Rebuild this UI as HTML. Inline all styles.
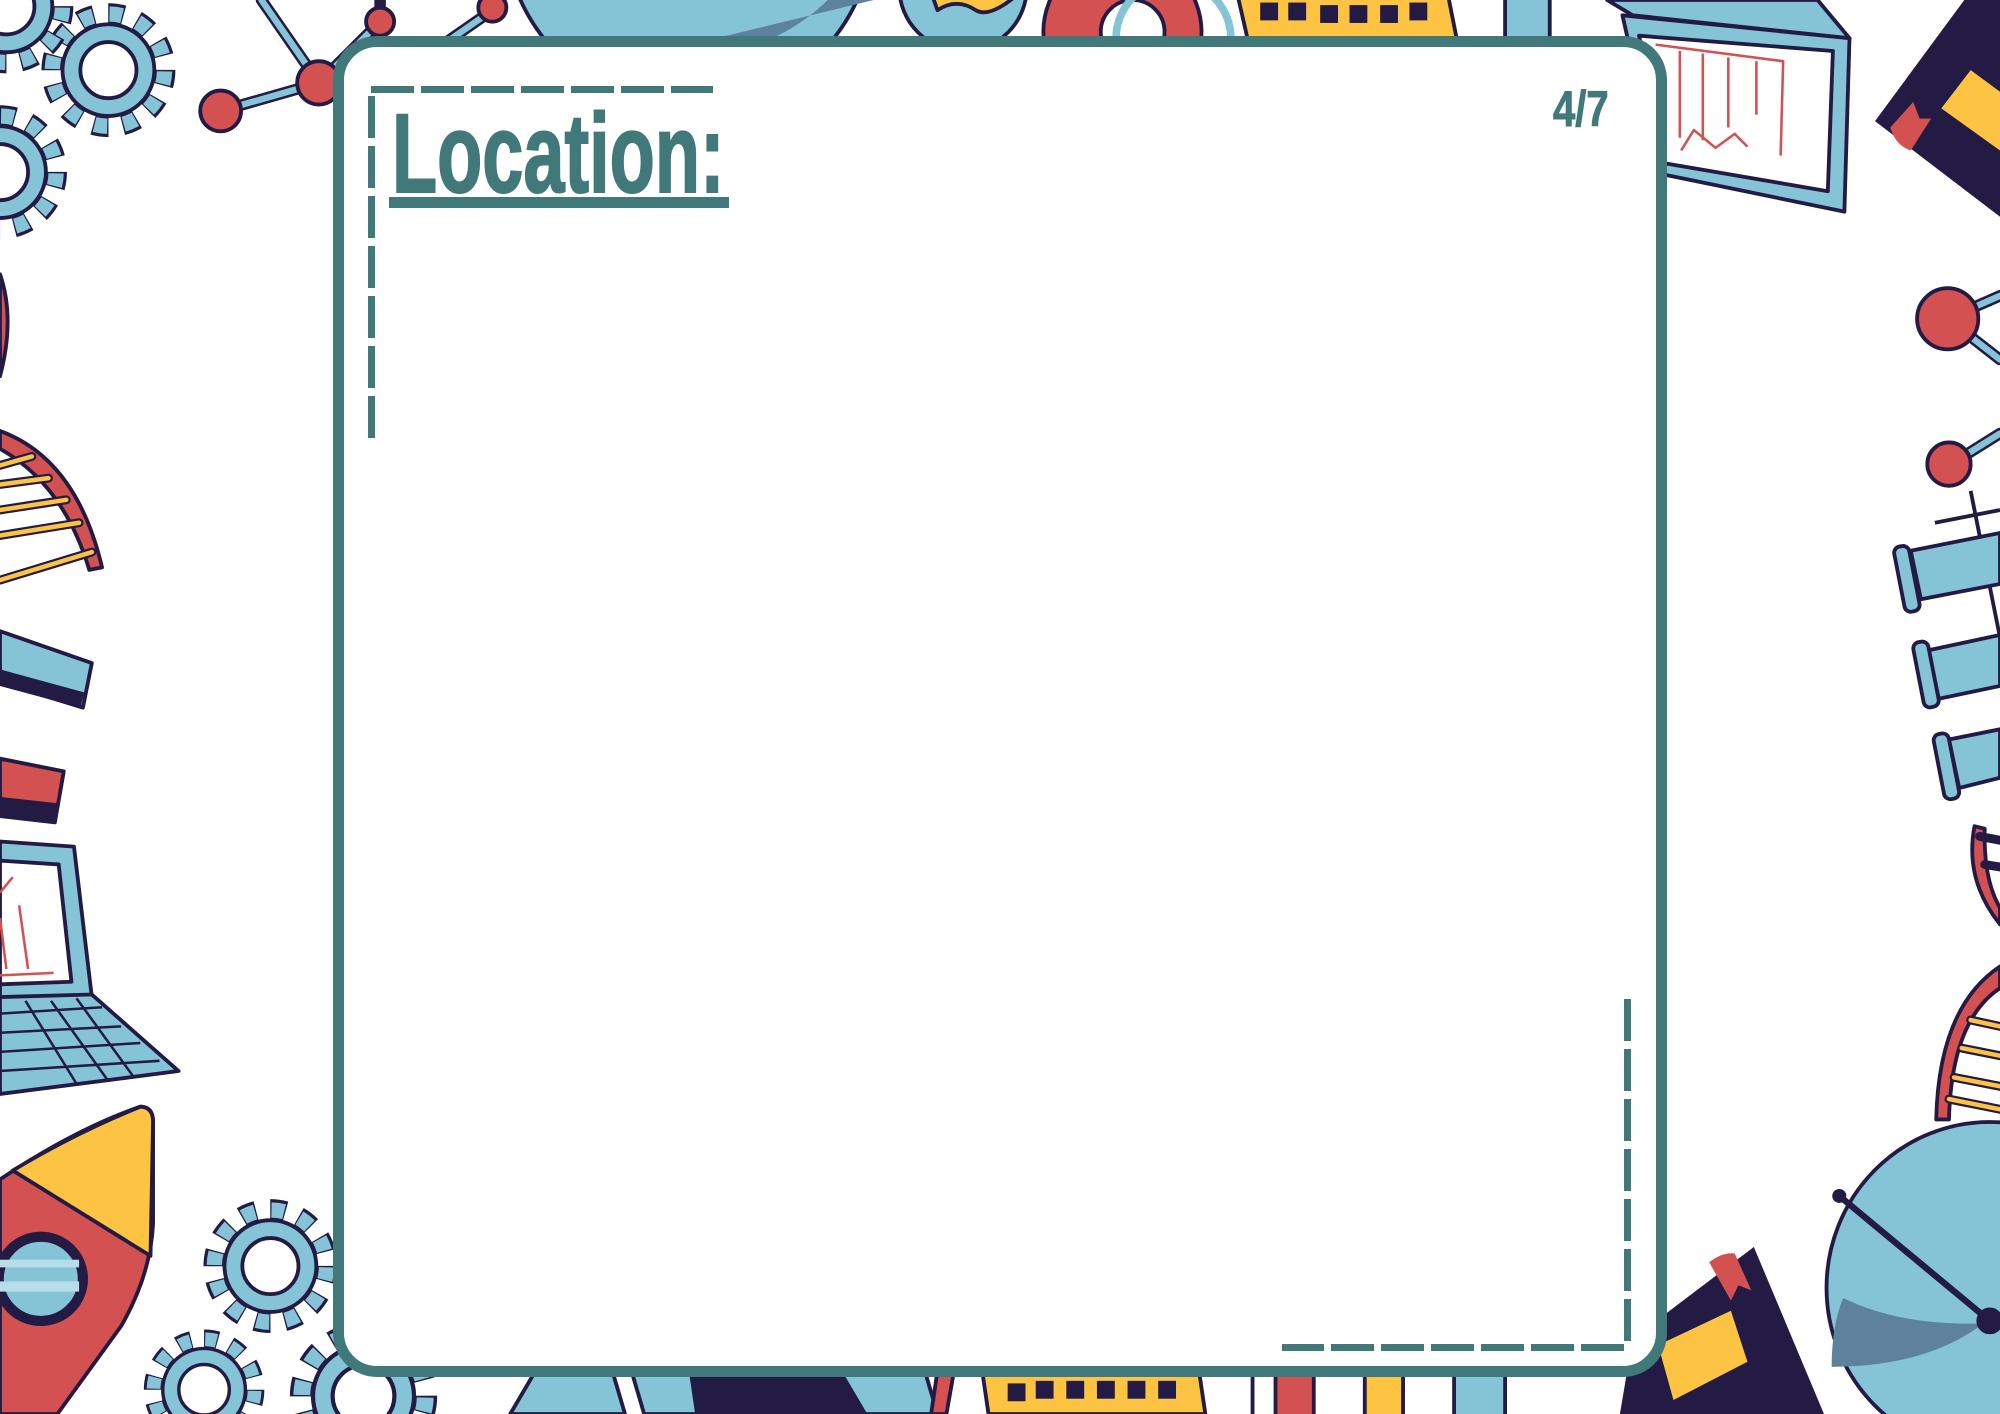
<!DOCTYPE html>
<html><head><meta charset="utf-8"><style>
html,body{margin:0;padding:0;background:#fff;}
body{width:2000px;height:1414px;position:relative;overflow:hidden;font-family:"Liberation Sans",sans-serif;}
svg.bg{position:absolute;left:0;top:0;}
.card{position:absolute;left:333px;top:36px;width:1334px;height:1341px;box-sizing:border-box;border:11px solid #41797B;border-radius:44px;background:#fff;}
.t{position:absolute;color:#41797B;font-family:"Liberation Sans",sans-serif;font-weight:bold;white-space:nowrap;-webkit-text-stroke:2px #41797B;}
.d{position:absolute;background:#41797B;}
</style></head><body>
<svg class="bg" width="2000" height="1414" viewBox="0 0 1568 1109" preserveAspectRatio="none">
<defs>
<g id="gear"><circle r="44" fill="none" stroke="#241B45" stroke-width="17" stroke-dasharray="12 11"/><circle r="44" fill="none" stroke="#85C4D6" stroke-width="12" stroke-dasharray="10 13" stroke-dashoffset="-1"/><circle r="36" fill="#85C4D6" stroke="#241B45" stroke-width="3"/><circle r="22" fill="#fff" stroke="#241B45" stroke-width="3"/></g>
</defs>
<g stroke="#241B45" stroke-width="3" stroke-linejoin="round">
<use href="#gear" x="85" y="55"/>
<use href="#gear" x="0" y="135"/>
<use href="#gear" x="5" y="5"/>
<g stroke-width="9" stroke-linecap="round"><line x1="173" y1="87" x2="250" y2="65"/><line x1="250" y1="65" x2="205" y2="0"/><line x1="250" y1="65" x2="298" y2="17"/><line x1="298" y1="17" x2="298" y2="0"/><line x1="340" y1="40" x2="386" y2="8"/></g>
<g stroke="#85C4D6" stroke-width="5" stroke-linecap="round"><line x1="173" y1="87" x2="250" y2="65"/><line x1="250" y1="65" x2="205" y2="0"/><line x1="250" y1="65" x2="298" y2="17"/><line x1="340" y1="40" x2="386" y2="8"/></g>
<circle cx="173" cy="87" r="16" fill="#D35150"/><circle cx="250" cy="65" r="17" fill="#D35150"/><circle cx="298" cy="17" r="11" fill="#D35150"/><circle cx="386" cy="6" r="11" fill="#D35150"/>
<circle cx="540" cy="-60" r="145" fill="#85C4D6"/>
<path d="M520 40 A145 145 0 0 0 685 -60 L685 0 Z" fill="#5E819E" stroke="none"/>
<circle cx="755" cy="-10" r="50" fill="#85C4D6"/>
<path d="M735 8 q15 -10 30 0 q10 6 30 -10 L800 -20 L725 -20Z" fill="#FDC443"/>
<circle cx="880" cy="25" r="62" fill="#D35150"/><circle cx="888" cy="25" r="25" fill="#fff"/>
<circle cx="920" cy="30" r="45" fill="none" stroke="#85C4D6" stroke-width="6"/>
<path d="M970 -5 L1135 -5 L1142 30 L978 30Z" fill="#FDC443"/>
<g fill="#241B45" stroke="none"><rect x="988" y="2" width="14" height="14"/><rect x="1010" y="2" width="14" height="14"/><rect x="1035" y="4" width="14" height="14"/><rect x="1058" y="4" width="14" height="14"/><rect x="1082" y="4" width="14" height="14"/><rect x="1105" y="2" width="14" height="14"/></g>
<rect x="1180" y="-5" width="35" height="45" fill="#85C4D6"/>
<path d="M1260 0 L1425 0 L1450 30 L1280 12Z" fill="#85C4D6"/>
<path d="M1272 12 L1450 30 L1446 166 L1300 136 Z" fill="#85C4D6"/>
<path d="M1285 28 L1437 40 L1433 150 L1305 128Z" fill="#fff"/>
<g stroke="#D35150" stroke-width="2" fill="none"><path d="M1298 35 L1398 48 L1396 122"/><path d="M1317 40 V108 M1335 42 V110 M1355 45 V100 M1377 48 V90"/><path d="M1318 118 L1328 102 L1345 116 L1360 105 L1370 115"/></g>
<path d="M1470 95 L1540 0 L1568 0 L1568 170 L1500 118Z" fill="#241B45" stroke="none"/>
<path d="M1522 85 L1545 55 L1568 72 L1568 118Z" fill="#FDC443" stroke="none"/>
<path d="M1482 100 L1500 80 L1505 93 L1514 93 L1498 118 Q1486 114 1482 100Z" fill="#D35150" stroke="none"/>
<g stroke-width="9" stroke-linecap="round"><line x1="1527" y1="250" x2="1568" y2="232"/><line x1="1527" y1="250" x2="1568" y2="282"/><line x1="1528" y1="365" x2="1568" y2="340"/></g>
<g stroke="#85C4D6" stroke-width="5" stroke-linecap="round"><line x1="1527" y1="250" x2="1568" y2="232"/><line x1="1527" y1="250" x2="1568" y2="282"/><line x1="1528" y1="365" x2="1568" y2="340"/></g>
<circle cx="1527" cy="250" r="24" fill="#D35150"/><circle cx="1528" cy="364" r="17" fill="#D35150"/>
<line x1="1517" y1="410" x2="1568" y2="400"/><line x1="1545" y1="385" x2="1568" y2="500"/>
<path d="M1498 432 L1568 418 L1568 458 L1506 470Z" fill="#85C4D6"/><rect x="1489" y="428" width="12" height="52" rx="5" fill="#85C4D6" transform="rotate(-11 1495 454)"/>
<path d="M1512 510 L1568 498 L1568 538 L1520 548Z" fill="#85C4D6"/><rect x="1504" y="503" width="12" height="52" rx="5" fill="#85C4D6" transform="rotate(-11 1510 529)"/>
<path d="M1528 580 L1568 572 L1568 610 L1536 618Z" fill="#85C4D6"/><rect x="1520" y="575" width="12" height="52" rx="5" fill="#85C4D6" transform="rotate(-11 1526 601)"/>
<path d="M1548 648 Q1540 690 1568 725 L1568 712 Q1555 690 1556 650Z" fill="#D35150"/>
<path d="M1568 758 Q1520 790 1518 878 L1528 878 Q1530 800 1568 775Z" fill="#D35150"/>
<g stroke-width="7" stroke-linecap="round"><line x1="1545" y1="800" x2="1568" y2="805"/><line x1="1538" y1="822" x2="1568" y2="828"/><line x1="1532" y1="845" x2="1568" y2="852"/><line x1="1528" y1="862" x2="1568" y2="870"/><line x1="1552" y1="656" x2="1568" y2="659"/><line x1="1556" y1="678" x2="1568" y2="680"/></g>
<g stroke="#FDC443" stroke-width="3.5" stroke-linecap="round"><line x1="1545" y1="800" x2="1568" y2="805"/><line x1="1538" y1="822" x2="1568" y2="828"/><line x1="1532" y1="845" x2="1568" y2="852"/><line x1="1528" y1="862" x2="1568" y2="870"/></g>
<ellipse cx="1560" cy="1010" rx="128" ry="130" fill="#85C4D6"/>
<path d="M1445 1018 Q1490 1040 1555 1038 Q1510 1072 1436 1072 Q1436 1040 1445 1018Z" fill="#5E819E" stroke="none"/>
<line x1="1442" y1="938" x2="1560" y2="1036" stroke-width="5"/><circle cx="1442" cy="938" r="4" fill="#241B45"/><circle cx="1560" cy="1036" r="9" fill="#241B45"/>
<path d="M1280 1050 L1375 978 L1430 1109 L1270 1109Z" fill="#241B45" stroke="none"/>
<path d="M1300 1055 L1357 1028 L1370 1068 L1312 1098Z" fill="#FDC443" stroke="none"/>
<path d="M1340 990 Q1350 982 1360 983 L1373 1012 L1363 1008 L1357 1020Z" fill="#D35150" stroke="none"/>
<path d="M400 1109 L420 1075 L480 1075 L490 1109Z" fill="#85C4D6"/>
<path d="M495 1075 L725 1075 L735 1109 L505 1109Z" fill="#85C4D6"/>
<path d="M540 1075 L660 1075 L680 1109 L545 1109Z" fill="#241B45" stroke="none"/>
<path d="M735 1075 L748 1075 L742 1109 L730 1109Z" fill="#D35150"/>
<path d="M770 1075 L940 1075 L945 1109 L775 1109Z" fill="#FDC443"/>
<g fill="#241B45" stroke="none"><rect x="790" y="1085" width="14" height="14"/><rect x="812" y="1083" width="14" height="14"/><rect x="836" y="1083" width="14" height="14"/><rect x="860" y="1083" width="14" height="14"/><rect x="884" y="1083" width="14" height="14"/><rect x="908" y="1083" width="14" height="14"/></g>
<rect x="982" y="1075" width="20" height="40" fill="#fff"/><rect x="1000" y="1075" width="30" height="40" fill="#D35150"/><rect x="1070" y="1075" width="30" height="40" fill="#FDC443"/><rect x="1140" y="1075" width="40" height="40" fill="#85C4D6"/>
<use href="#gear" x="212" y="993"/>
<g transform="translate(160 1090) scale(0.9)"><use href="#gear"/></g>
<g transform="translate(285 1095) scale(1.1)"><use href="#gear"/></g>
<path d="M0 925 Q60 885 110 868 Q120 868 120 880 L120 960 Q118 1000 95 1040 L45 1109 L0 1109Z" fill="#D35150"/>
<path d="M10 918 Q60 888 110 868 Q120 868 120 880 L118 985Z" fill="#FDC443"/>
<circle cx="32" cy="1003" r="33" fill="#85C4D6" stroke-width="8"/>
<rect x="0" y="988" width="62" height="6" fill="#B7DEE8" stroke="none"/><rect x="0" y="1005" width="62" height="8" fill="#B7DEE8" stroke="none"/>
<path d="M0 660 L58 664 L72 782 L0 785Z" fill="#85C4D6"/>
<path d="M0 675 L46 678 L56 770 L0 772Z" fill="#fff"/>
<g stroke="#D35150" stroke-width="2" fill="none"><path d="M0 765 L42 763 M15 710 L22 760 M0 720 L5 760 M0 700 L10 688"/></g>
<path d="M0 782 L72 780 L140 840 L0 858Z" fill="#85C4D6"/>
<g stroke-width="2"><path d="M0 795 L80 790 M0 810 L95 805 M0 825 L110 818 M0 840 L125 832 M20 785 L60 850 M40 785 L85 848 M60 783 L105 845"/></g>
<path d="M0 495 L72 520 L65 555 L0 535Z" fill="#85C4D6"/><path d="M0 525 L66 543 L63 555 L0 538Z" fill="#241B45" stroke="none"/>
<path d="M0 595 L50 605 L43 645 L0 640Z" fill="#D35150"/><path d="M0 625 L45 630 L43 645 L0 640Z" fill="#241B45" stroke="none"/>
<path d="M0 338 Q60 360 80 445 L70 447 Q50 380 0 352Z" fill="#D35150"/>
<g stroke-width="7" stroke-linecap="round"><line x1="0" y1="365" x2="25" y2="358"/><line x1="0" y1="380" x2="38" y2="375"/><line x1="0" y1="400" x2="52" y2="392"/><line x1="0" y1="420" x2="62" y2="410"/><line x1="0" y1="455" x2="72" y2="433"/></g>
<g stroke="#FDC443" stroke-width="3.5" stroke-linecap="round"><line x1="0" y1="365" x2="25" y2="358"/><line x1="0" y1="380" x2="38" y2="375"/><line x1="0" y1="400" x2="52" y2="392"/><line x1="0" y1="420" x2="62" y2="410"/><line x1="0" y1="455" x2="72" y2="433"/></g>
<path d="M0 215 Q12 250 0 295Z" fill="#D35150"/>
</g>
</svg>
<div class="card"></div>
<div class="d" style="left:371px;top:86px;width:342px;height:7px;background:repeating-linear-gradient(90deg,#41797B 0 43px,transparent 43px 50px);"></div>
<div class="d" style="left:368px;top:96px;width:7px;height:342px;background:repeating-linear-gradient(180deg,#41797B 0 42px,transparent 42px 50px);"></div>
<div class="d" style="left:1624px;top:999px;width:7px;height:342px;background:repeating-linear-gradient(180deg,#41797B 0 42px,transparent 42px 50px);"></div>
<div class="d" style="left:1282px;top:1344px;width:342px;height:7px;background:repeating-linear-gradient(270deg,#41797B 0 43px,transparent 43px 50px);"></div>
<div class="t" style="left:392px;top:98px;font-size:112px;line-height:112px;transform:scaleX(0.66);transform-origin:left top;">Location:</div>
<div class="d" style="left:389px;top:197px;width:340px;height:11px;"></div>
<div class="t" style="left:1553px;top:84px;font-size:50px;line-height:50px;transform:scaleX(0.8);transform-origin:left top;-webkit-text-stroke:1px #41797B;">4/7</div>
</body></html>
